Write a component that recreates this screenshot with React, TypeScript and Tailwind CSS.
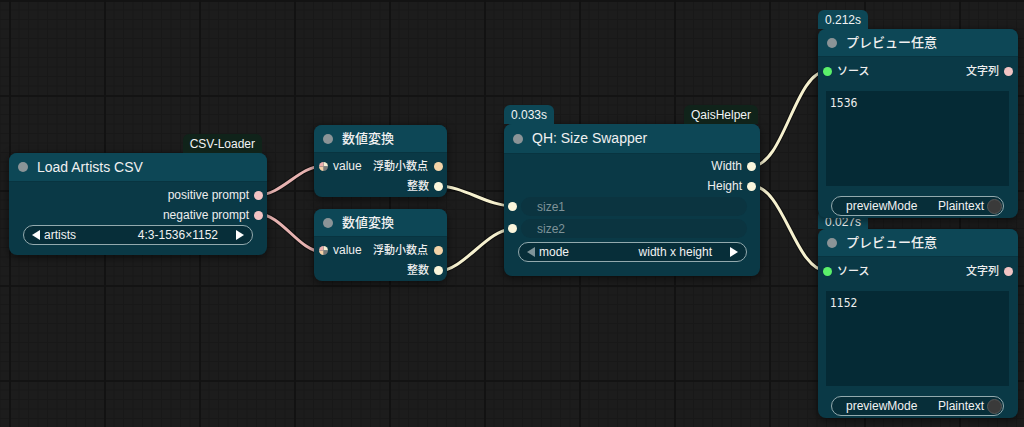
import type { ReactNode } from 'react';

const sans = "font-['Liberation_Sans','Noto_Sans_CJK_JP',sans-serif]";

// link splines between node slots
const links = [
  { d: 'M258 195 C 282 195 299 166 323 166', color: '#e7b3b1' },
  { d: 'M258 214 C 282 214 299 252 323 252', color: '#e7b3b1' },
  { d: 'M438 186 C 464 186 487 206 513 206', color: '#f6f1cf' },
  { d: 'M438 271 C 464 271 487 229 513 229', color: '#f6f1cf' },
  { d: 'M752 166 C 784 166 795 71 827 71', color: '#f6f1cf' },
  { d: 'M752 186 C 784 186 795 271 827 271', color: '#f6f1cf' },
];

function Dot({ color }: { color: string }) {
  return <span className={`block size-[9px] shrink-0 rounded-full ${color}`} />;
}

function MultiDot() {
  return (
    <svg viewBox="0 0 10 10" className="size-[9px] shrink-0">
      <path d="M5 5 L5 0 A5 5 0 0 1 10 5 Z" fill="#f7f0d2" />
      <path d="M5 5 L10 5 A5 5 0 0 1 5 10 Z" fill="#7a7a7a" />
      <path d="M5 5 L5 10 A5 5 0 0 1 0 5 Z" fill="#f3cfa6" />
      <path d="M5 5 L0 5 A5 5 0 0 1 5 0 Z" fill="#eeb0ae" />
    </svg>
  );
}

function Arrow({ dir, dim }: { dir: 'left' | 'right'; dim?: boolean }) {
  return (
    <svg viewBox="0 0 8 10" className={`h-[10px] w-[8px] shrink-0 ${dim ? 'text-[#7f9499]' : 'text-white'}`}>
      <path d={dir === 'left' ? 'M8 0 L0 5 L8 10 Z' : 'M0 0 L8 5 L0 10 Z'} fill="currentColor" />
    </svg>
  );
}

function Badge({ children, side, tone }: { children: ReactNode; side: string; tone: string }) {
  return (
    <div className={`absolute bottom-full h-[19px] rounded-t-md px-[7px] text-[12px] text-[#f2f4f4] ${side} ${tone}`}>
      {children}
    </div>
  );
}

function Node({ pos, title, titleH, children }: { pos: string; title: ReactNode; titleH: string; children: ReactNode }) {
  return (
    <div className={`absolute rounded-lg bg-[#0a3946] shadow-[0_2px_8px_rgba(0,0,0,0.55)] ${pos}`}>
      <div className={`flex items-center gap-[9px] rounded-t-lg border-b border-[#083440] bg-[#0d4756] pl-[9px] text-[14px] text-[#f0f0f0] ${titleH}`}>
        <span className="size-[10px] rounded-full bg-[#8b9497]" />
        {title}
      </div>
      {children}
    </div>
  );
}

function OutRow({ label, dot }: { label: ReactNode; dot: string }) {
  return (
    <div className="flex h-[20px] items-center justify-end gap-[5px] pr-[4px] text-[12px] text-[#eeeeee]">
      {label}
      <Dot color={dot} />
    </div>
  );
}

function Combo({ label, value, dimLeft, mx }: { label: string; value: string; dimLeft?: boolean; mx: string }) {
  return (
    <div className={`flex h-[20px] items-center rounded-full border border-[#93aaae] bg-[#072e39] px-[8px] text-[12px] text-[#f2f2f2] ${mx}`}>
      <Arrow dir="left" dim={dimLeft} />
      <span className="ml-[4px]">{label}</span>
      <span className="ml-auto">{value}</span>
      <span className="ml-[18px]">
        <Arrow dir="right" />
      </span>
    </div>
  );
}

function Toggle({ mx }: { mx: string }) {
  return (
    <div className={`flex h-[20px] items-center rounded-full border border-[#93aaae] bg-[#072e39] pl-[14px] pr-[1px] text-[12px] text-[#f2f2f2] ${mx}`}>
      <span>previewMode</span>
      <span className="ml-auto">Plaintext</span>
      <span className="ml-[3px] size-[15px] rounded-full border border-[#555] bg-[#3a3a3a]" />
    </div>
  );
}

function Convert({ pos }: { pos: string }) {
  return (
    <Node pos={pos} titleH="h-[28px]" title={<span className="text-[13px] font-medium">数値変換</span>}>
      <div className="pb-[1px] pt-[3px]">
        <div className="flex h-[20px] items-center pl-[5px] pr-[4px] text-[12px] text-[#eeeeee]">
          <MultiDot />
          <span className="ml-[5px]">value</span>
          <span className="ml-auto text-[11px] font-medium">浮動小数点</span>
          <span className="ml-[6px]">
            <Dot color="bg-[#f3d3a8]" />
          </span>
        </div>
        <OutRow label={<span className="text-[11px] font-medium">整数</span>} dot="bg-[#fbf6dc]" />
      </div>
    </Node>
  );
}

function Preview({ pos, value, time, timePad }: { pos: string; value: string; time: string; timePad: string }) {
  return (
    <Node pos={pos} titleH="h-[28px]" title={<span className="text-[13px] font-medium">プレビュー任意</span>}>
      <Badge side="left-0" tone={`bg-[#0d4756] ${timePad}`}>{time}</Badge>
      <div className="pb-[2px] pt-[4px]">
        <div className="flex h-[20px] items-center pl-[5px] pr-[5px] text-[11px] font-medium text-[#eeeeee]">
          <Dot color="bg-[#5bf06a]" />
          <span className="ml-[5px]">ソース</span>
          <span className="ml-auto">文字列</span>
          <span className="ml-[5px]">
            <Dot color="bg-[#f2c4c4]" />
          </span>
        </div>
        <div className="ml-[8px] mr-[9px] mt-[10px] h-[95px] bg-[#052a35] px-[4px] pt-[3px] font-['Liberation_Sans_Narrow','DejaVu_Sans_Condensed','Liberation_Sans',sans-serif] text-[12px] text-[#eeeeee]">
          {value}
        </div>
        <div className="mt-[10px]">
          <Toggle mx="ml-[13px] mr-[14px]" />
        </div>
      </div>
    </Node>
  );
}

export default function App() {
  return (
    <div
      className={`relative h-[427px] w-[1024px] overflow-hidden bg-[#1c1c1c] bg-[image:linear-gradient(to_right,#121212_2px,transparent_2px),linear-gradient(to_bottom,#131313_2px,transparent_2px),linear-gradient(to_right,#181818_1px,transparent_1px),linear-gradient(to_bottom,#181818_1px,transparent_1px)] bg-[size:95px_95px,95px_95px,9.5px_9.5px,9.5px_9.5px] bg-[position:9px_0px] ${sans}`}
    >
      {/* links */}
      <svg className="absolute inset-0" width="1024" height="427">
        {links.map((l, i) => (
          <g key={i} fill="none" strokeLinecap="round">
            <path d={l.d} stroke="rgba(0,0,0,0.45)" strokeWidth={5} />
            <path d={l.d} stroke={l.color} strokeWidth={3} />
          </g>
        ))}
      </svg>

      {/* Load Artists CSV */}
      <Node pos="left-[9px] top-[153px] w-[258px]" titleH="h-[29px]" title="Load Artists CSV">
        <Badge side="right-[5px]" tone="bg-[#10231a] leading-[20px]">CSV-Loader</Badge>
        <div className="pb-[10px] pt-[3px]">
          <OutRow label="positive prompt" dot="bg-[#f2c4c4]" />
          <OutRow label="negative prompt" dot="bg-[#f2c4c4]" />
          <Combo label="artists" value="4:3-1536×1152" mx="ml-[14px] mr-[14px]" />
        </div>
      </Node>

      <Convert pos="left-[314px] top-[125px] w-[133px]" />
      <Convert pos="left-[314px] top-[209px] w-[133px]" />

      {/* QH: Size Swapper */}
      <Node pos="left-[504px] top-[124px] w-[256px]" titleH="h-[30px]" title="QH: Size Swapper">
        <Badge side="left-0" tone="bg-[#0d4756] leading-[20px]">0.033s</Badge>
        <Badge side="right-[2px]" tone="bg-[#10231a] leading-[20px]">QaisHelper</Badge>
        <div className="pb-[14px] pt-[2px]">
          <OutRow label="Width" dot="bg-[#fbf6dc]" />
          <OutRow label="Height" dot="bg-[#fbf6dc]" />
          {['size1', 'size2'].map((s, i) => (
            <div key={s} className={`flex h-[19px] items-center pl-[4px] ${i === 0 ? 'mt-[1px]' : 'mt-[3px]'}`}>
              <Dot color="bg-[#fbf6dc]" />
              <div className="ml-[4px] mr-[13px] flex h-full flex-1 items-center rounded-[10px] bg-[#0b3440] pl-[16px] text-[12px] text-[#7f9398]">
                {s}
              </div>
            </div>
          ))}
          <div className="mt-[4px]">
            <Combo label="mode" value="width x height" dimLeft mx="ml-[14px] mr-[13px]" />
          </div>
        </div>
      </Node>

      <Preview pos="left-[818px] top-[229px] w-[200px]" value="1152" time="0.027s" timePad="leading-[24px]" />
      <Preview pos="left-[818px] top-[29px] w-[200px]" value="1536" time="0.212s" timePad="leading-[20px]" />
    </div>
  );
}
